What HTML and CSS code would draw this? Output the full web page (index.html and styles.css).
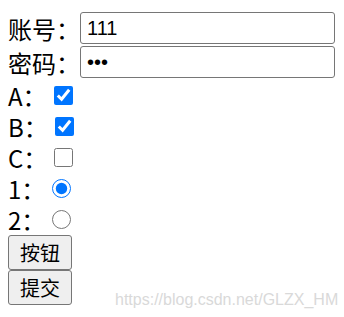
FILE: index.html
```html
<!DOCTYPE html>
<html lang="zh-CN">
<head>
<meta charset="utf-8">
<title>表单</title>
<link rel="stylesheet" href="styles.css">
</head>
<body>
<form class="form">
  <div class="field">
    <span class="label">账号：</span><input class="text" type="text" value="111">
  </div>
  <div class="field">
    <span class="label">密码：</span><input class="text" type="password" value="111">
  </div>
  <div class="option">
    <span class="label">A：</span><input class="box" type="checkbox" checked>
  </div>
  <div class="option">
    <span class="label">B：</span><input class="box" type="checkbox" checked>
  </div>
  <div class="option">
    <span class="label">C：</span><input class="box" type="checkbox">
  </div>
  <div class="option">
    <span class="label">1：</span><input class="box" type="radio" name="num" checked>
  </div>
  <div class="option">
    <span class="label">2：</span><input class="box" type="radio" name="num">
  </div>
  <div class="buttons">
    <button class="btn" type="button">按钮</button>
    <button class="btn" type="submit">提交</button>
  </div>
</form>
<div class="watermark">https://blog.csdn.net/GLZX_HM</div>
</body>
</html>
```

FILE: styles.css
```css
html, body {
  margin: 0;
  padding: 0;
  background: #ffffff;
}

body {
  position: relative;
  width: 344px;
  height: 317px;
  overflow: hidden;
  font-family: "Noto Sans CJK SC", "Noto Sans", sans-serif;
  font-size: 24px;
  color: #000000;
}

.form {
  display: flex;
  flex-direction: column;
  align-items: flex-start;
  padding: 12px 0 0 8px;
  margin: 0;
}

.field {
  display: flex;
  align-items: center;
  height: 32px;
  margin-bottom: 2px;
}

.label {
  font-size: 24px;
  line-height: 31px;
  white-space: nowrap;
}

.text {
  box-sizing: border-box;
  width: 255px;
  height: 32px;
  margin: 0;
  padding: 0 6px;
  border: 1px solid #767676;
  border-radius: 3px;
  background: #ffffff;
  font-family: "Liberation Sans", Arial, sans-serif;
  font-size: 20px;
  color: #000000;
  outline: none;
}

.option {
  display: flex;
  align-items: center;
  height: 31px;
}

.box {
  width: 19px;
  height: 19px;
  margin: 0 0 0 7px;
}

.buttons {
  display: flex;
  flex-direction: column;
  align-items: flex-start;
}

.btn {
  box-sizing: border-box;
  height: 35px;
  margin: 0;
  padding: 0 11px;
  border: 1px solid #767676;
  border-radius: 3px;
  background: #efefef;
  font-family: "Noto Sans CJK SC", "Noto Sans", sans-serif;
  font-size: 20px;
  line-height: 1;
  color: #000000;
}

.watermark {
  position: absolute;
  left: 115px;
  top: 291px;
  font-family: "Liberation Sans", Arial, sans-serif;
  font-size: 16px;
  line-height: 18px;
  color: #d9d9d9;
  white-space: nowrap;
}
```
